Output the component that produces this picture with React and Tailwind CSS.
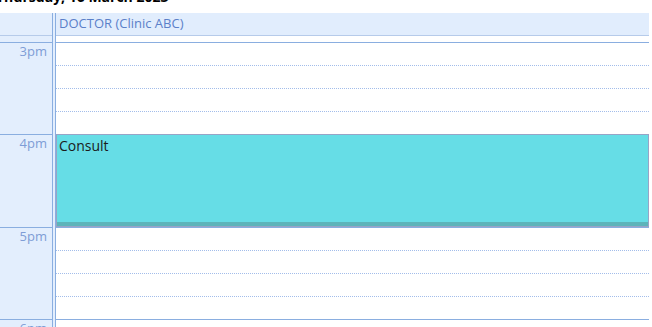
import React from "react";

const hours = [
    { label: "3pm", last: "h-[22px]" },
    { label: "4pm", last: "h-[23px]" },
    { label: "5pm", last: "h-[22px]" },
    { label: "6pm", last: "h-[22px]" },
];

const App = () => {
    return (
        <div className="w-[649px] h-[327px] overflow-hidden bg-white font-['Open_Sans',sans-serif]">
            <div className="h-[13px] overflow-hidden">
                <div className="-mt-[10px] -ml-[4px] text-[14px] leading-[14px] font-bold text-black whitespace-nowrap">
                    Thursday, 16 March 2023
                </div>
            </div>

            <div className="flex">
                {/* time column */}
                <div className="w-[53px] shrink-0 bg-[#e3eefd] border-r border-[#8aaee0]">
                    <div className="h-[23px] border-b border-[#b6cbea]" />
                    <div className="h-[6px]" />
                    {hours.map((h, i) => (
                        <div
                            key={h.label}
                            className={`${i === 1 ? "h-[93px]" : "h-[92px]"} border-t border-[#8aaee0] text-right pr-[5px] text-[13px] leading-[16px] text-[#7e9dd6]`}
                        >
                            {h.label}
                        </div>
                    ))}
                </div>
                <div className="w-[2px] shrink-0 bg-[#e3eefd]" />

                {/* main column */}
                <div className="flex-1 border-l border-[#8aaee0]">
                    <div className="h-[23px] bg-[#e1edfd] border-b border-[#b6cbea] pl-[3px] pt-[2px] text-[13px] leading-[16px] text-[#5b80c9]">
                        DOCTOR (Clinic ABC)
                    </div>
                    <div className="h-[6px]" />
                    <div className="relative">
                        {hours.map((h) => (
                            <div key={h.label} className="border-t border-[#8aaee0]">
                                <div className="h-[23px] border-b border-dotted border-[#a3bdea]" />
                                <div className="h-[23px] border-b border-dotted border-[#a3bdea]" />
                                <div className="h-[23px] border-b border-dotted border-[#a3bdea]" />
                                <div className={h.last} />
                            </div>
                        ))}

                        <div className="absolute left-0 right-0 top-[92px] h-[93px] bg-[#66dde6] border border-[#98a4c6] flex flex-col">
                            <div className="flex-1 px-[2px] pt-[2px] text-[14px] leading-[17px] text-[#1b1b1b]">
                                Consult
                            </div>
                            <div className="h-[4px] bg-[#5db4ba]" />
                        </div>
                    </div>
                </div>
            </div>
        </div>
    );
};

export default App;
